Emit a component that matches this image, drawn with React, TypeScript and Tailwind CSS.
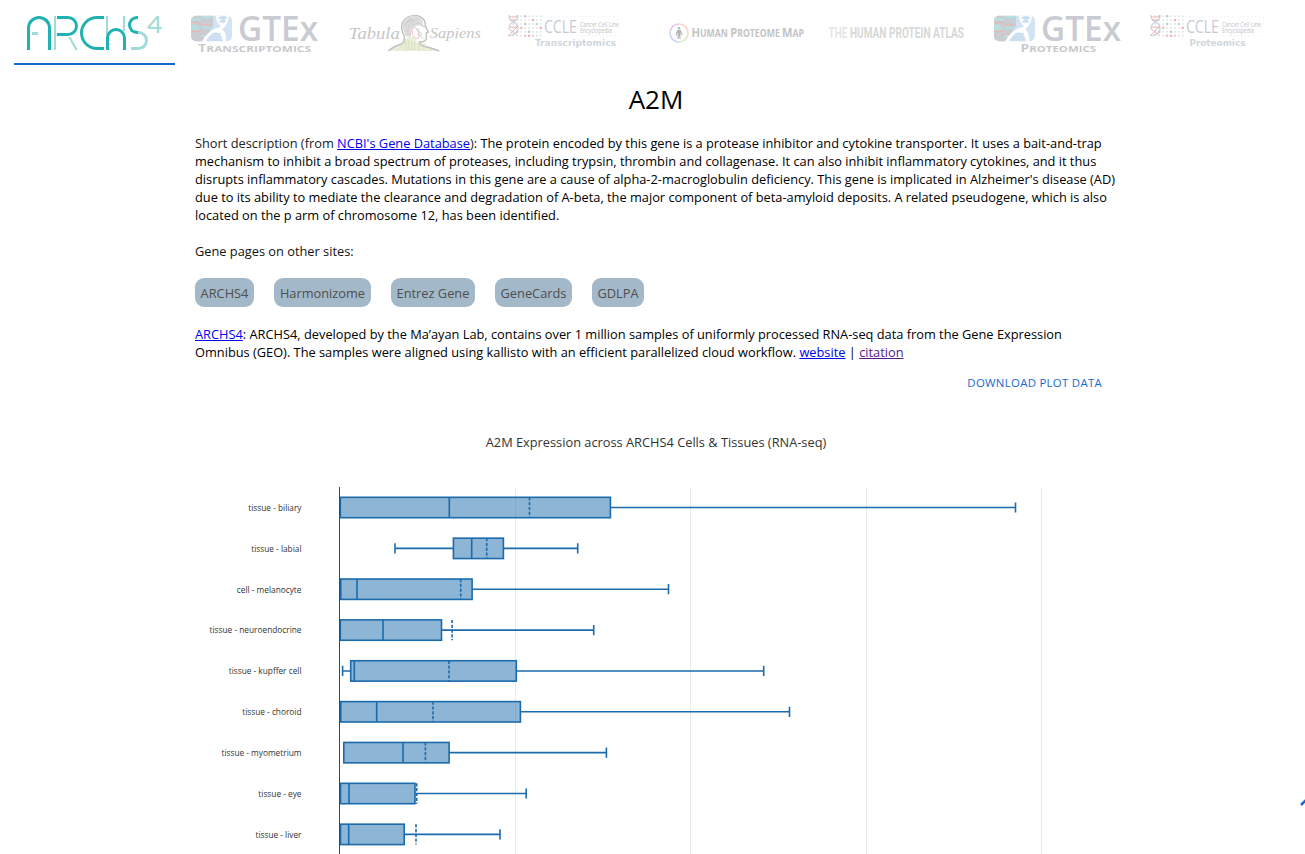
import type { ReactNode } from "react";

type TissueRow = {
  name: string;
  q1: number;
  median: number;
  q3: number;
  mean: number;
  low?: number;
  high: number;
};

const rows: TissueRow[] = [
  { name: "tissue - biliary", q1: 340.3, median: 449.3, q3: 610.4, mean: 529.5, high: 1015.5 },
  { name: "tissue - labial", q1: 453.4, median: 471.7, q3: 503.4, mean: 486.7, low: 395, high: 577.7 },
  { name: "cell - melanocyte", q1: 340.8, median: 357, q3: 472.1, mean: 460.7, high: 668.5 },
  { name: "tissue - neuroendocrine", q1: 340.3, median: 383, q3: 441.5, mean: 452.1, high: 593.7 },
  { name: "tissue - kupffer cell", q1: 350.7, median: 354.3, q3: 516.3, mean: 449, low: 342.6, high: 763.7 },
  { name: "tissue - choroid", q1: 340.8, median: 376.7, q3: 520.4, mean: 433, high: 789.5 },
  { name: "tissue - myometrium", q1: 343.8, median: 403, q3: 449.1, mean: 425.4, high: 606.4 },
  { name: "tissue - eye", q1: 340.5, median: 349, q3: 415, mean: 416.7, high: 526.2 },
  { name: "tissue - liver", q1: 340.5, median: 348.7, q3: 404.2, mean: 416, high: 500 },
];

const sites = [
  { name: "ARCHS4", width: "w-[59px]" },
  { name: "Harmonizome", width: "w-[97px]" },
  { name: "Entrez Gene", width: "w-[84px]" },
  { name: "GeneCards", width: "w-[77px]" },
  { name: "GDLPA", width: "w-[52px]" },
];

function Archs4Logo() {
  return (
    <div className="flex h-[34px] items-start" role="img" aria-label="ARCHS4">
      <div className="flex h-[34px] w-6 flex-col rounded-t-full border-x-[3px] border-t-[3px] border-[#20b2b0] pt-[13px] pl-[2px]">
        <div className="h-[3px] w-[6px] bg-[#9edcd5]" />
      </div>
      <div className="ml-[3px] h-[34px] w-[2px] bg-[#9edcd5]" />
      <div className="ml-px flex w-[22px] flex-col">
        <div className="h-5 w-[21px] rounded-r-full border-y-[3px] border-r-[3px] border-[#20b2b0]" />
        <div className="ml-[15px] h-[15px] w-[2px] -rotate-[29deg] bg-[#9edcd5]" />
      </div>
      <div className="ml-px h-[34px] w-[24px] rounded-l-full border-y-[3px] border-l-[3px] border-[#20b2b0]" />
      <div className="ml-[2px] h-[34px] w-[2px] bg-[#9edcd5]" />
      <div className="-ml-[2px] mt-[12px] h-[22px] w-5 rounded-t-full border-x-[3px] border-t-[3px] border-[#20b2b0]" />
      <div className="-ml-[3px] h-[15px] w-[2px] bg-[#9edcd5]" />
      <div className="ml-[3px] flex w-5 flex-col">
        <div className="h-[18px] w-[10px] rounded-l-full border-y-[3px] border-l-[3px] border-[#20b2b0]" />
        <div className="-mt-[3px] ml-[10px] h-[19px] w-[10px] rounded-r-full border-y-[3px] border-r-[3px] border-[#9edcd5]" />
        <div className="-mt-[3px] ml-[3px] h-[3px] w-[8px] bg-[#9edcd5]" />
      </div>
      <span className="-mt-[4px] -ml-px inline-block origin-left scale-x-[1.12] font-[Lato] text-[24px] leading-[24px] text-[#9edcd5]">4</span>
    </div>
  );
}

function GtexLogo({ kind, start, end }: { kind: string; start: number; end: number }) {
  return (
    <svg viewBox="175.1 0 160.4 65" className="h-[65px] w-full overflow-visible">
      <rect x="191" y="15.7" width="41" height="25.6" rx="5" fill="#d2e3f3" />
      <path d="M196 15.7h17v10l-10 15.6h-7a5 5 0 0 1-5-5V20.7a5 5 0 0 1 5-5Z" fill="#c9ccd1" />
      <path d="M191 19.500h10M202 17h10M202 27.500h9M191 28.700h8M191 26h6M201 36h4" stroke="#b5e3e4" strokeWidth="2.200" />
      <path d="M191 22.500h10M201 25h10M191 31.500h10M199 34.500h5" stroke="#efb3ae" strokeWidth="1.200" />
      <path d="M216 15.700q0 6 5 11-12 2-19 14.600h4q4-8 10-9 6 2 6 9h4q1-8-4-12 6-4 7-13.600h-3q-1 6-3 8-3-3-3-8Z" fill="#fff" />
      <path d="M218 18h9M219 21.500h7M212 34h9M209 37h13M207 40h16" stroke="#c7dcef" strokeWidth="1.400" />
      <text x="238" y="41" textLength="80" lengthAdjust="spacingAndGlyphs" fontFamily="Open Sans" fontWeight="600" fontSize="35" fill="#c8cbd1">GTEx</text>
      <text x={start} y="52" textLength={end - start} lengthAdjust="spacingAndGlyphs" fontFamily="Open Sans" fontWeight="700" fontSize="8.3" fill="#c8c9cb">
        <tspan fontSize="10">{kind[0]}</tspan>
        {kind.slice(1).toUpperCase()}
      </text>
    </svg>
  );
}

function TabulaSapiensLogo() {
  return (
    <svg viewBox="335.3 0 160.4 65" className="h-[65px] w-full overflow-visible">
      <g fontFamily="Liberation Serif" fontStyle="italic" fill="#c6c6c6">
        <text x="349" y="39" fontSize="17" textLength="51" lengthAdjust="spacingAndGlyphs">Tabula</text>
        <text x="430" y="38" fontSize="15" textLength="51" lengthAdjust="spacingAndGlyphs">Sapiens</text>
      </g>
      <path d="M389 51q3-4 12-6 6-2 6-8h9v4q2 3 9 2 0 4 8 5l6 3Z" fill="#e8efd6" />
      <path d="M388.500 51q4-4 13-7 4-3 3-8-7-13 4-19 9-4 15 2 2 2 2 7l3 6-2 1v5q0 4-7 4 0 4 8 5 7 2 12 4" fill="none" stroke="#c2c2c2" strokeWidth="1.500" />
      <path d="M403 29q-2-10 8-13 9-1 12 5v5q-7-2-11 3l-1 8-5-1Z" fill="#dedede" />
      <path d="M405 27q1-7 7-8M408 29q1-6 7-8M411 28q3-5 9-5M405 31h5M407 34h4M407 22l12-3M404 25l10-7" fill="none" stroke="#c4c4c4" strokeWidth=".6" />
      <path d="M415 27q-4 2-2 8 3 5 6 3v-5q-2-4-4-6Z" fill="#fff" stroke="#edb6b2" strokeWidth=".8" />
      <path d="M417 28l5 7M418 34l5 4M421 25l4 2" stroke="#c8c8c8" strokeWidth="1" />
      <path d="M406 39v11M409 40v10M412 41v9M415 42v8M419 44v6M400 47q5-2 5-7" fill="none" stroke="#d6ddc0" strokeWidth="1" />
    </svg>
  );
}

function CcleLogo({ kind, start, end }: { kind: string; start: number; end: number }) {
  const dots: ReactNode[] = [];
  const strong: Record<string, string> = {
    "1-0": "#c9d1d8", "3-0": "#bdc8d1", "5-1": "#eeb5b5", "3-2": "#bdc8d1", "6-2": "#c9d1d8",
    "2-3": "#eec1c1", "1-4": "#c9d1d8", "4-4": "#bdc8d1", "7-3": "#efb5b5", "3-5": "#eec1c1",
    "5-5": "#d2d8de", "4-5": "#eeb5b5",
  };
  for (let row = 0; row < 6; row++) {
    for (let col = 0; col < 8; col++) {
      const tone = strong[`${col}-${row}`];
      dots.push(<circle key={`${col}-${row}`} cx={513.5 + col * 3.9} cy={16.2 + row * 3.9} r={tone ? 1.3 : 0.9} fill={tone ?? "#dce0e5"} />);
    }
  }
  return (
    <svg viewBox="496.2 0 160.4 65" className="h-[65px] w-full overflow-visible">
      {dots}
      <path d="M509 15q0 5 4.500 7t4.500 7-9 7M518 15q0 5-4.500 7T509 29" fill="none" stroke="#c6d0d9" strokeWidth="1.200" />
      <path d="M508 36l10-10M509 29l8 6M509 17h8M510 20h6M510 27h7" fill="none" stroke="#edb3b3" strokeWidth="1" />
      <path d="M543 16.300h82M576 35.700h50" stroke="#e4e7ea" strokeWidth=".9" strokeDasharray="1 2.900" />
      <path d="M617 20.200h8M621 24.100h4M619 28h6M617 32h8" stroke="#eceef0" strokeWidth=".9" strokeDasharray="1 2.900" />
      <text x="544" y="32.700" textLength="33" lengthAdjust="spacingAndGlyphs" fontFamily="Open Sans" fontSize="18.500" fill="#c3ccd5">CCLE</text>
      <g fontFamily="Open Sans" fontSize="6.200" fill="#b9c2ca">
        <text x="580" y="26.600" textLength="39" lengthAdjust="spacingAndGlyphs">Cancer Cell Line</text>
        <text x="580" y="33" textLength="32" lengthAdjust="spacingAndGlyphs">Encyclopedia</text>
      </g>
      <text x={start} y="46" textLength={end - start} lengthAdjust="spacingAndGlyphs" fontFamily="DejaVu Sans" fontWeight="700" fontSize="9.300" fill="#cfd6dc">{kind}</text>
    </svg>
  );
}

function ProteomeMapLogo() {
  return (
    <svg viewBox="656.6 0 160.4 65" className="h-[65px] w-full overflow-visible">
      <g fill="none" strokeWidth="1.700">
        <path d="M669.500 33a9 9 0 0 1 9-9" stroke="#e6c8e8" />
        <path d="M678.500 24a9 9 0 0 1 9 9" stroke="#f8d6c4" />
        <path d="M687.500 33a9 9 0 0 1-9 9" stroke="#dfebc2" />
        <path d="M678.500 42a9 9 0 0 1-9-9" stroke="#c6d8f1" />
      </g>
      <circle cx="678.500" cy="28.200" r="1.300" fill="#b5b5b5" />
      <path d="M676.700 30h3.600l1.700 5-1 .4-1.200-3 .2 6.600h-1.100l-.4-4-.4 4H677l.2-6.600-1.200 3-1-.4Z" fill="#b5b5b5" />
      <text x="691" y="37" textLength="112.500" lengthAdjust="spacingAndGlyphs" fontFamily="Open Sans" fontWeight="700" fontSize="9.800" fill="#c4c4c4">
        <tspan fontSize="12.500">H</tspan>UMAN <tspan fontSize="12.500">P</tspan>ROTEOME <tspan fontSize="12.500">M</tspan>AP
      </text>
    </svg>
  );
}

function ProteinAtlasLogo() {
  return (
    <svg viewBox="817.2 0 160.4 65" className="h-[65px] w-full overflow-visible">
      <text x="828.5" y="38" textLength="135.500" lengthAdjust="spacingAndGlyphs" fontFamily="Roboto" fontWeight="700" fontSize="15.500" fill="#d8d8d8">
        <tspan fill="#e6e6e6">THE</tspan> HUMAN PROTEIN ATLAS
      </text>
    </svg>
  );
}

function ExpressionChart() {
  return (
    <svg viewBox="195 470 922 384" className="block h-[384px] w-[922px] shrink-0">
      {[515.5, 690.5, 866.5, 1041.5].map((x) => (
        <line key={x} x1={x} x2={x} y1="488" y2="854" stroke="#ebebeb" />
      ))}
      {rows.map((row, index) => {
        const y = 507.5 + index * 40.86;
        return (
          <g key={row.name} stroke="#1c6bac" strokeWidth="1.6" fill="none">
            <rect x={row.q1} y={y - 10.2} width={row.q3 - row.q1} height="20.4" fill="#1c6bac" fillOpacity="0.5" />
            <path d={`M${row.median} ${y - 10.2}v20.4M${row.q3} ${y}H${row.high}M${row.high} ${y - 5.1}v10.2`} />
            {row.low !== undefined && <path d={`M${row.q1} ${y}H${row.low}M${row.low} ${y - 5.1}v10.2`} />}
            <path d={`M${row.mean} ${y - 10.2}v20.4`} strokeDasharray="3.2 1.6" />
            <text x="301.5" y={y + 3.3} textAnchor="end" fontFamily="Open Sans" fontSize="8.3" fill="#333333" stroke="none">{row.name}</text>
          </g>
        );
      })}
      <line x1="339.5" x2="339.5" y1="487" y2="854" stroke="#444444" />
    </svg>
  );
}

export default function App() {
  return (
    <div className="relative flex h-[854px] flex-col overflow-hidden bg-white font-['Open_Sans',sans-serif] text-[12.8px] leading-[18px] text-black">
      <header className="ml-[14px] grid h-[65px] w-[1285px] shrink-0 grid-cols-8">
        <div className="border-b-2 border-[#1769cf] pt-4 pl-[13px]">
          <Archs4Logo />
        </div>
        <GtexLogo kind="Transcriptomics" start={198} end={311} />
        <TabulaSapiensLogo />
        <CcleLogo kind="Transcriptomics" start={535} end={616} />
        <ProteomeMapLogo />
        <ProteinAtlasLogo />
        <GtexLogo kind="Proteomics" start={217.5} end={293} />
        <CcleLogo kind="Proteomics" start={547.5} end={603.5} />
      </header>

      <main className="ml-[195px] flex w-[922px] shrink-0 flex-col">
        <h1 className="mt-4 text-center text-[26px] leading-9">A2M</h1>
        <p className="mt-[17px]">
          <span className="text-[#222]">Short description (from </span>
          <a className="text-[#0000ee] underline">NCBI's Gene Database</a>
          <span className="text-[#222]">):</span> The protein encoded by this gene is a protease inhibitor and cytokine
          transporter. It uses a bait-and-trap mechanism to inhibit a broad spectrum of proteases, including trypsin,
          thrombin and collagenase. It can also inhibit inflammatory cytokines, and it thus disrupts inflammatory
          cascades. Mutations in this gene are a cause of alpha-2-macroglobulin deficiency. This gene is implicated in
          Alzheimer's disease (AD) due to its ability to mediate the clearance and degradation of A-beta, the major
          component of beta-amyloid deposits. A related pseudogene, which is also located on the p arm of chromosome
          12, has been identified.
        </p>
        <p className="mt-[18px] text-[#111]">Gene pages on other sites:</p>
        <nav className="mt-[18px] flex gap-5">
          {sites.map((site) => (
            <a key={site.name} className={`${site.width} flex h-[29px] items-center justify-center rounded-[9px] bg-[#a3b8c9] pt-px whitespace-nowrap text-[#4f4f4f]`}>
              {site.name}
            </a>
          ))}
        </nav>
        <p className="mt-[18px]">
          <a className="text-[#0000ee] underline">ARCHS4</a>: ARCHS4, developed by the Ma’ayan Lab, contains over 1
          million samples of uniformly processed RNA-seq data from the Gene Expression Omnibus (GEO). The samples were
          aligned using kallisto with an efficient parallelized cloud workflow.{" "}
          <a className="text-[#0000ee] underline">website</a> | <a className="text-[#551a8b] underline">citation</a>
        </p>
        <button className="mt-[13px] mr-[15px] self-end text-[11.4px] leading-[18px] font-medium tracking-[0.3px] text-[#1769cf]">
          DOWNLOAD PLOT DATA
        </button>
        <h2 className="mt-[41px] mb-[19px] text-center text-[#333]">A2M Expression across ARCHS4 Cells &amp; Tissues (RNA-seq)</h2>
        <ExpressionChart />
      </main>

      <svg viewBox="0 0 5 8" className="absolute top-[799px] right-0 h-2 w-[5px]">
        <path d="M1 6l5-5" stroke="#1967d2" strokeWidth="2.500" />
      </svg>
    </div>
  );
}
